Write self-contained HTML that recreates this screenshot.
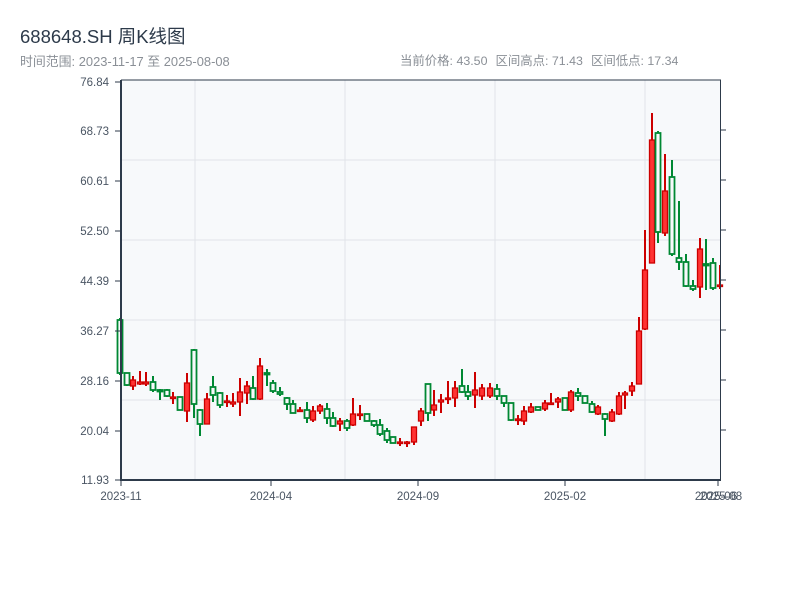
<!DOCTYPE html>
<html><head><meta charset="utf-8">
<style>
body{margin:0;background:#fff;width:800px;height:600px;overflow:hidden;font-family:"Liberation Sans","Noto Sans CJK SC",sans-serif;}
.t{position:absolute;left:20px;top:23px;font-size:18.5px;color:#2d3a4a;}
.s{position:absolute;top:51px;font-size:12.9px;color:#8a8f96;white-space:nowrap}
.s span{margin-right:8px}
svg{position:absolute;left:0;top:0}
</style></head><body>
<div class="t">688648.SH 周K线图</div>
<div class="s" style="left:20px">时间范围: 2023-11-17 至 2025-08-08</div>
<div class="s" style="left:400px;font-size:12.4px"><span>当前价格: 43.50</span><span>区间高点: 71.43</span>区间低点: 17.34</div>
<svg id="c" width="800" height="600" xmlns="http://www.w3.org/2000/svg" font-family="Liberation Sans, sans-serif" font-size="11.5" fill="#4a5563">
<rect x="121" y="80" width="599" height="400" fill="#f7f9fb"/>
<g stroke="#e1e4e8" stroke-width="1">
<line x1="195" y1="80" x2="195" y2="480"/><line x1="345" y1="80" x2="345" y2="480"/><line x1="495" y1="80" x2="495" y2="480"/><line x1="645" y1="80" x2="645" y2="480"/>
<line x1="121" y1="160" x2="720" y2="160"/><line x1="121" y1="240" x2="720" y2="240"/><line x1="121" y1="320" x2="720" y2="320"/><line x1="121" y1="400" x2="720" y2="400"/>
</g>
<g id="k"></g>
<g stroke="#2d3a4a">
<line x1="121" y1="80" x2="121" y2="481" stroke-width="2"/>
<line x1="120" y1="480" x2="721" y2="480" stroke-width="2"/>
<line x1="121" y1="80" x2="721" y2="80" stroke-width="1"/>
<line x1="720.5" y1="80" x2="720.5" y2="480" stroke-width="1"/>
<g stroke-width="1">
<line x1="115" y1="82" x2="121" y2="82"/><line x1="115" y1="131" x2="121" y2="131"/><line x1="115" y1="181" x2="121" y2="181"/><line x1="115" y1="231" x2="121" y2="231"/><line x1="115" y1="281" x2="121" y2="281"/><line x1="115" y1="331" x2="121" y2="331"/><line x1="115" y1="381" x2="121" y2="381"/><line x1="115" y1="431" x2="121" y2="431"/><line x1="115" y1="480" x2="121" y2="480"/>
<line x1="720" y1="130" x2="726" y2="130"/><line x1="720" y1="180" x2="726" y2="180"/><line x1="720" y1="230" x2="726" y2="230"/><line x1="720" y1="280" x2="726" y2="280"/><line x1="720" y1="330" x2="726" y2="330"/><line x1="720" y1="380" x2="726" y2="380"/><line x1="720" y1="430" x2="726" y2="430"/>
<line x1="121" y1="480" x2="121" y2="486"/><line x1="271" y1="480" x2="271" y2="486"/><line x1="418" y1="480" x2="418" y2="486"/><line x1="565" y1="480" x2="565" y2="486"/><line x1="718" y1="480" x2="718" y2="486"/>
</g></g>
<g text-anchor="end">
<text x="109" y="86">76.84</text><text x="109" y="135">68.73</text><text x="109" y="185">60.61</text><text x="109" y="235">52.50</text><text x="109" y="285">44.39</text><text x="109" y="335">36.27</text><text x="109" y="385">28.16</text><text x="109" y="435">20.04</text><text x="109" y="484">11.93</text>
</g>
<g text-anchor="middle">
<text x="121" y="500">2023-11</text><text x="271" y="500">2024-04</text><text x="418" y="500">2024-09</text><text x="565" y="500">2025-02</text><text x="716" y="500">2025-06</text><text x="721" y="500">2025-08</text>
</g>
</svg>
<script>
var d=[[120,320,373,318,375,0],[127,373,385,373,386,0],[133,380,386,376,390,1],[140,382,384,371,385,1],[146,382,384,372,386,1],[153,382,390,376,392,0],[160,390,391,389,400,0],[167,390,396,389,397,0],[173,397,398,392,404,1],[180,397,410,397,410,0],[187,383,411,373,422,1],[194,350,404,349,418,0],[200,410,424,409,436,0],[207,399,424,393,424,1],[213,387,395,376,402,0],[220,393,405,392,408,0],[227,401,402,395,407,1],[233,402,404,393,407,1],[240,392,402,378,416,1],[247,386,393,381,404,1],[253,388,399,376,400,0],[260,366,399,358,400,1],[267,373,374,369,386,0],[273,383,391,380,393,0],[280,392,394,387,396,0],[287,398,404,397,410,0],[293,404,413,400,413,0],[300,410,411,407,412,1],[307,410,418,402,423,0],[313,411,420,406,422,1],[320,406,411,404,414,1],[327,409,418,403,424,0],[333,418,426,412,427,0],[340,421,424,418,431,1],[347,421,428,419,431,0],[353,414,425,398,426,1],[360,414,415,405,420,1],[367,414,421,414,421,0],[374,421,425,420,427,0],[380,425,434,419,436,0],[387,431,440,428,443,0],[393,437,443,437,443,0],[400,442,443,438,446,1],[407,442,443,441,447,1],[414,427,442,427,445,1],[421,411,421,408,426,1],[428,384,413,384,421,0],[434,405,410,390,416,1],[441,400,402,394,413,1],[448,398,399,381,404,1],[455,388,398,381,407,1],[462,386,392,369,393,0],[468,392,396,385,400,0],[475,390,395,372,408,1],[482,388,396,384,400,1],[490,388,396,383,398,1],[497,389,396,384,400,0],[504,396,403,396,407,0],[511,403,420,403,421,0],[518,419,420,415,425,1],[524,411,421,406,425,1],[531,407,412,403,413,1],[538,407,410,407,410,0],[545,403,409,400,411,1],[551,403,404,393,404,1],[558,399,402,397,408,1],[565,398,410,398,410,0],[571,392,410,390,412,1],[578,393,396,388,401,0],[585,396,403,396,403,0],[592,404,412,401,413,0],[598,407,414,405,415,1],[605,414,419,413,436,0],[612,412,421,409,422,1],[619,396,414,392,415,1],[625,393,395,391,409,1],[632,386,391,382,396,1],[639,331,384,317,384,1],[645,270,329,230,330,1],[652,140,263,113,263,1],[658,133,232,131,243,0],[665,191,233,154,236,1],[672,177,254,160,256,0],[679,258,262,201,270,0],[686,262,286,254,287,0],[693,286,289,280,291,0],[700,249,287,238,298,1],[706,264,265,239,290,0],[713,263,288,258,290,0],[720,285,286,265,289,1]];
var s='';d.forEach(function(c){var col=c[5]?'#cc0000':'#008833',f=c[5]?'#ff3333':'#f7f9fb';
s+='<line x1="'+c[0]+'" x2="'+c[0]+'" y1="'+c[3]+'" y2="'+c[4]+'" stroke="'+col+'" stroke-width="2"/>';
var h=Math.max(c[2]-c[1],1.5);s+='<rect x="'+(c[0]-2.5)+'" y="'+c[1]+'" width="5" height="'+h+'" fill="'+f+'" stroke="'+col+'" stroke-width="'+(c[5]?1.3:1.8)+'"/>';});
document.getElementById('k').innerHTML=s;
</script>
</body></html>
